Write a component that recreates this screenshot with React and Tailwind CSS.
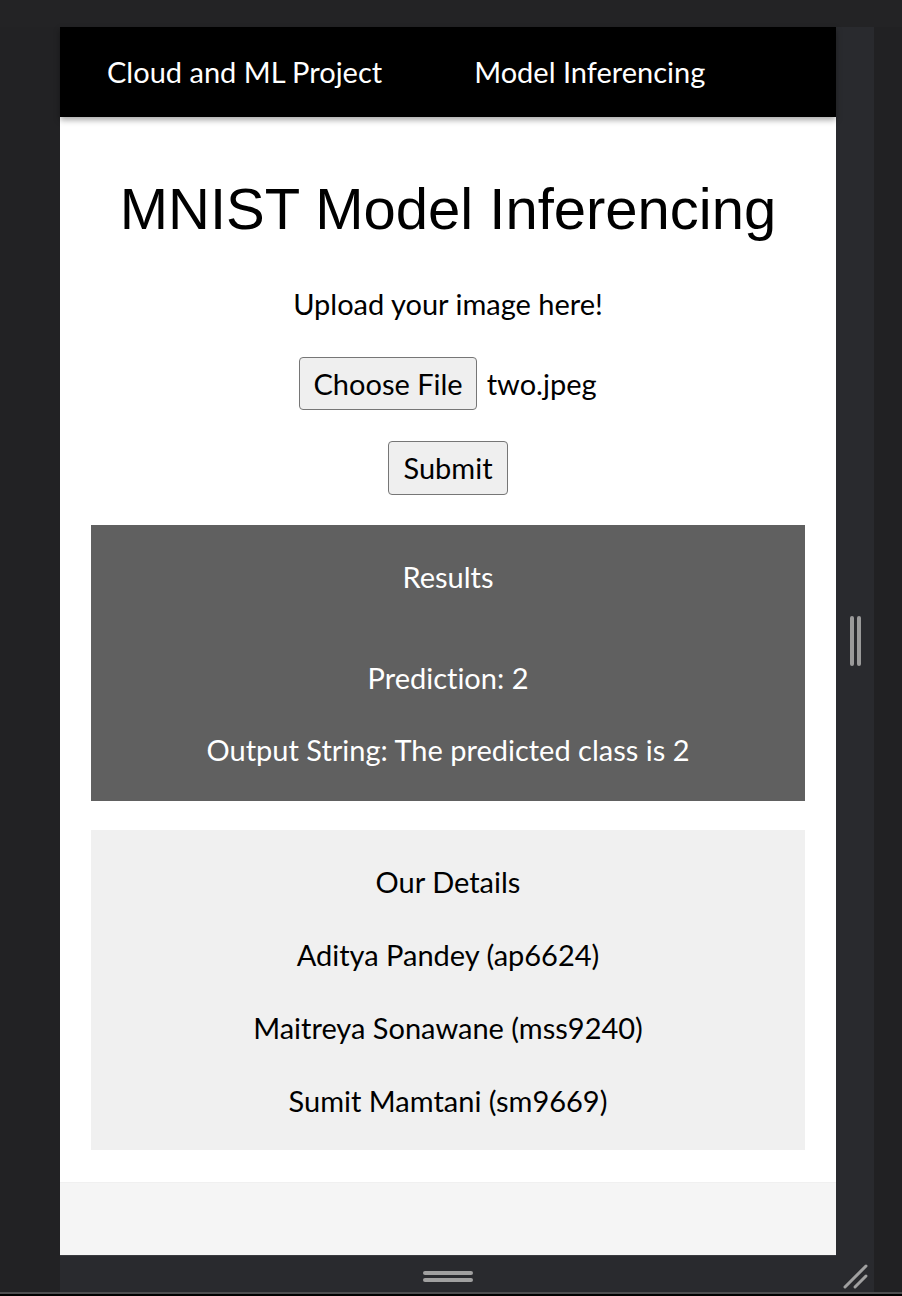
import React from "react";

export default function App() {
  return (
    <div className="w-[902px] h-[1296px] bg-[#222224] flex flex-col overflow-hidden font-['Lato',sans-serif] [font-variant-ligatures:none]">
      <div className="h-[27px] shrink-0 bg-[#232325]" />
      <div className="flex h-[1228px] shrink-0">
        <div className="w-[60px] shrink-0" />
        <main className="w-[776px] shrink-0 bg-white flex flex-col">
          <nav className="relative z-10 h-[90px] shrink-0 bg-black flex items-center pl-[47px] shadow-[0_3px_6px_rgba(0,0,0,0.35)]">
            <span className="text-white text-[29px] leading-[34px]">Cloud and ML Project</span>
            <span className="text-white text-[29px] leading-[34px] ml-[92px]">Model Inferencing</span>
          </nav>
          <section className="flex-1 flex flex-col items-center">
            <h1 className="mt-[59px] font-['Liberation_Sans',Arial,sans-serif] text-[58px] leading-[66px] text-black">
              MNIST Model Inferencing
            </h1>
            <p className="mt-[45px] text-[29px] leading-[34px] text-black">Upload your image here!</p>
            <div className="mt-[36px] flex items-center">
              <button className="h-[53px] px-[13px] bg-[#efefef] border border-[#767676] rounded-[4px] text-[29px] leading-[34px] text-black">
                Choose File
              </button>
              <span className="ml-[10px] text-[29px] leading-[34px] text-black">two.jpeg</span>
            </div>
            <button className="mt-[31px] h-[54px] px-[14px] bg-[#efefef] border border-[#767676] rounded-[4px] text-[29px] leading-[34px] text-black">
              Submit
            </button>
            <div className="mt-[30px] w-[714px] h-[276px] bg-[#606060] flex flex-col items-center text-white text-[29px] leading-[34px]">
              <p className="mt-[35px]">Results</p>
              <p className="mt-[67px]">Prediction: 2</p>
              <p className="mt-[38px]">Output String: The predicted class is 2</p>
            </div>
            <div className="mt-[29px] w-[714px] h-[320px] bg-[#f0f0f0] flex flex-col items-center gap-[39px] pt-[35px] text-black text-[29px] leading-[34px]">
              <p>Our Details</p>
              <p>Aditya Pandey (ap6624)</p>
              <p>Maitreya Sonawane (mss9240)</p>
              <p>Sumit Mamtani (sm9669)</p>
            </div>
          </section>
          <footer className="h-[73px] shrink-0 bg-[#f5f5f5] border-t border-[#f0f0f0]" />
        </main>
        <div className="w-[38px] shrink-0 bg-[#292a2e] flex items-center justify-center">
          <div className="flex gap-[3px] pl-[1px]">
            <div className="w-[4px] h-[50px] rounded-full bg-[#9a9a9a]" />
            <div className="w-[4px] h-[50px] rounded-full bg-[#9a9a9a]" />
          </div>
        </div>
        <div className="flex-1 bg-[#212123]" />
      </div>
      <div className="flex h-[37px] shrink-0">
        <div className="w-[60px] shrink-0" />
        <div className="w-[776px] shrink-0 bg-[#292a2e] border-t border-[#3a3b3f] flex items-center justify-center">
          <div className="flex flex-col gap-[3px] mt-[4px]">
            <div className="w-[50px] h-[4px] rounded-full bg-[#a0a0a0]" />
            <div className="w-[50px] h-[4px] rounded-full bg-[#a0a0a0]" />
          </div>
        </div>
        <div className="w-[38px] shrink-0 bg-[#292a2e] flex items-center justify-center">
          <svg width="28" height="28" viewBox="0 0 28 28" className="mt-[4px]">
            <line x1="4" y1="25" x2="25" y2="4" stroke="#a0a0a0" strokeWidth="3" strokeLinecap="round" />
            <line x1="14" y1="25" x2="25" y2="14" stroke="#a0a0a0" strokeWidth="3" strokeLinecap="round" />
          </svg>
        </div>
        <div className="flex-1 bg-[#212123]" />
      </div>
      <div className="h-[2px] shrink-0 bg-[#4e4e50]" />
      <div className="flex-1 bg-black" />
    </div>
  );
}
